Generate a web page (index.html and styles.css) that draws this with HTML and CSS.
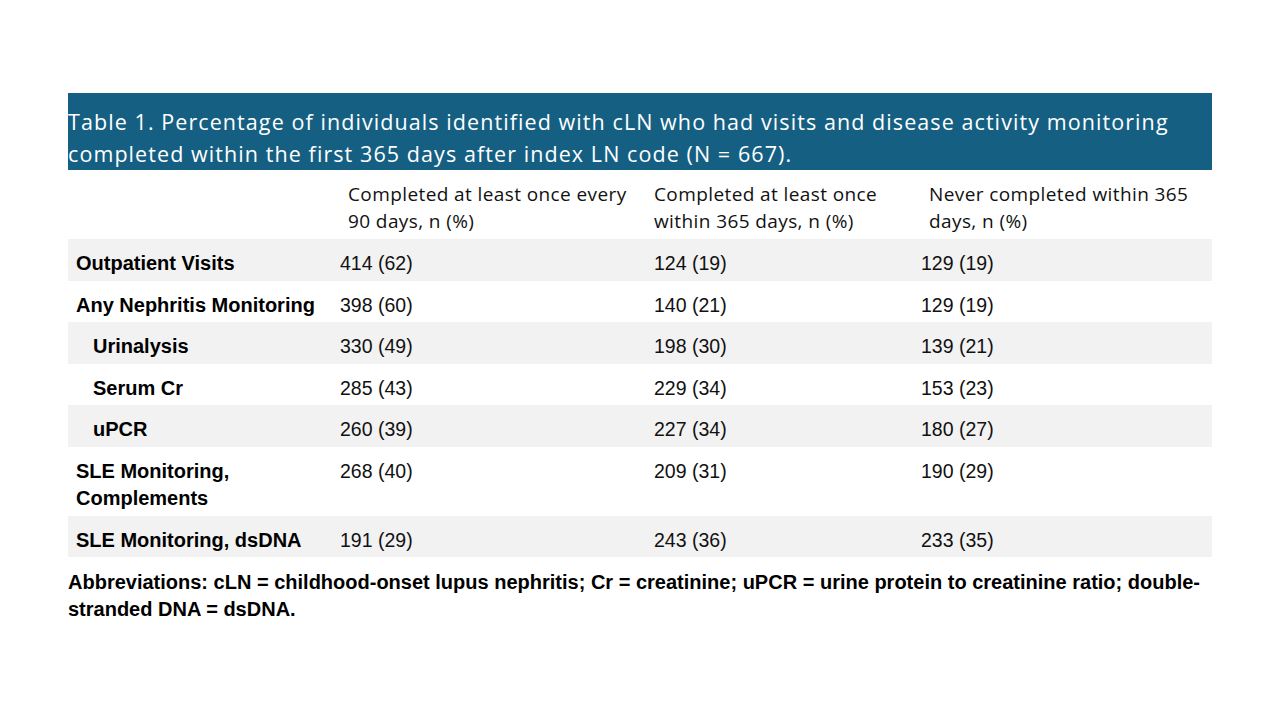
FILE: index.html
```html
<!DOCTYPE html>
<html>
<head>
<meta charset="utf-8">
<link rel="stylesheet" href="styles.css">
</head>
<body>
<div class="slide">
  <div class="title">Table 1. Percentage of individuals identified with cLN who had visits and disease activity monitoring completed within the first 365 days after index LN code (N = 667).</div>
  <table class="tbl">
    <colgroup>
      <col class="c1"><col class="c2"><col class="c3"><col class="c4">
    </colgroup>
    <thead>
      <tr class="hdr">
        <th></th>
        <th class="p16">Completed at least once every 90 days, n (%)</th>
        <th class="p8">Completed at least once within 365 days, n (%)</th>
        <th class="p16">Never completed within 365 days, n (%)</th>
      </tr>
    </thead>
    <tbody>
      <tr class="shade"><td class="lbl">Outpatient Visits</td><td>414 (62)</td><td>124 (19)</td><td>129 (19)</td></tr>
      <tr><td class="lbl">Any Nephritis Monitoring</td><td>398 (60)</td><td>140 (21)</td><td>129 (19)</td></tr>
      <tr class="shade"><td class="lbl sub">Urinalysis</td><td>330 (49)</td><td>198 (30)</td><td>139 (21)</td></tr>
      <tr><td class="lbl sub">Serum Cr</td><td>285 (43)</td><td>229 (34)</td><td>153 (23)</td></tr>
      <tr class="shade"><td class="lbl sub">uPCR</td><td>260 (39)</td><td>227 (34)</td><td>180 (27)</td></tr>
      <tr class="tall"><td class="lbl">SLE Monitoring, Complements</td><td>268 (40)</td><td>209 (31)</td><td>190 (29)</td></tr>
      <tr class="shade"><td class="lbl">SLE Monitoring, dsDNA</td><td>191 (29)</td><td>243 (36)</td><td>233 (35)</td></tr>
    </tbody>
  </table>
  <p class="note">Abbreviations: cLN = childhood-onset lupus nephritis; Cr = creatinine; uPCR = urine protein to creatinine ratio; double-stranded DNA = dsDNA.</p>
</div>
</body>
</html>
```
FILE: styles.css
```css
html, body {
  margin: 0;
  padding: 0;
  background: #ffffff;
}
.slide {
  width: 1280px;
  height: 720px;
  padding: 93px 68px 0 68px;
  box-sizing: border-box;
  color: #000;
}
.title {
  background: #156082;
  color: #ffffff;
  font-family: "Open Sans", "Liberation Sans", sans-serif;
  font-size: 21.5px;
  letter-spacing: 1.08px;
  line-height: 32px;
  height: 77px;
  box-sizing: border-box;
  padding-top: 13px;
}
.tbl {
  width: 1144px;
  border-collapse: collapse;
  table-layout: fixed;
}
.c1 { width: 264px; }
.c2 { width: 314px; }
.c3 { width: 267px; }
.c4 { width: 299px; }
.hdr th {
  font-family: "Open Sans", "Liberation Sans", sans-serif;
  font-weight: normal;
  font-size: 19px;
  letter-spacing: 0.4px;
  line-height: 27px;
  text-align: left;
  vertical-align: top;
  padding: 11px 8px 4px 8px;
  height: 69px;
  box-sizing: border-box;
  color: #111;
}
.hdr th.p16 { padding-left: 16px; }
.tbl td {
  font-family: "Liberation Sans Narrow", "Liberation Sans", sans-serif;
  font-size: 19.5px;
  line-height: 27px;
  vertical-align: top;
  padding: 11px 8px 3px 8px;
  height: 41.5px;
  box-sizing: border-box;
  color: #111;
}
.tbl td.lbl {
  font-family: "Liberation Sans", sans-serif;
  font-weight: bold;
  font-size: 20px;
  letter-spacing: 0;
  color: #000;
}
.tbl td.sub { padding-left: 25px; }
.tall td { height: 69px; }
.shade td { background: #f2f2f2; }
.note {
  margin: 0;
  padding-top: 12px;
  font-family: "Liberation Sans", sans-serif;
  font-weight: bold;
  font-size: 20px;
  line-height: 27px;
  text-align: justify;
  width: 1132px;
}
```
